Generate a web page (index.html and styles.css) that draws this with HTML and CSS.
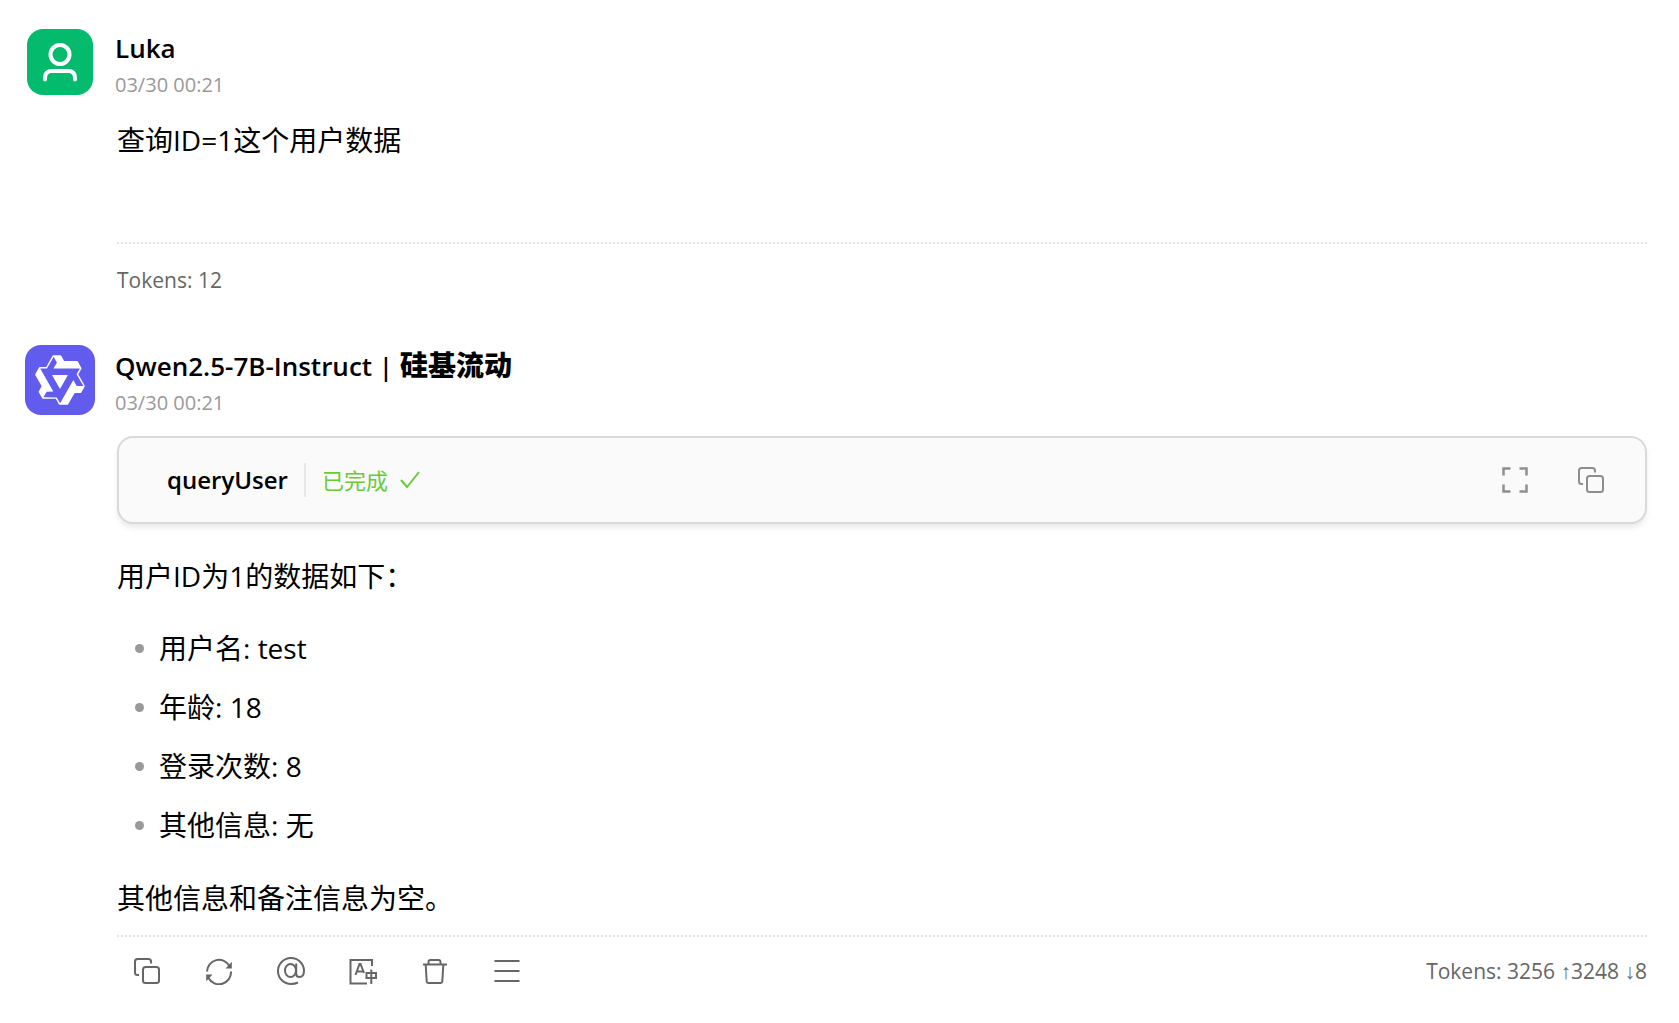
FILE: index.html
```html
<!DOCTYPE html>
<html lang="zh-CN">
<head>
<meta charset="utf-8">
<meta name="viewport" content="width=device-width, initial-scale=1">
<title>Chat</title>
<link rel="stylesheet" href="styles.css">
</head>
<body>
<svg class="sprite" aria-hidden="true">
  <symbol id="icon-copy" viewBox="0 0 28 28">
    <path d="M6 18H4.500a2.500 2.500 0 0 1-2.500-2.500V4.500A2.500 2.500 0 0 1 4.500 2h11A2.500 2.500 0 0 1 18 4.500V6.500"/>
    <rect x="10" y="10" width="16" height="16" rx="2.500"/>
  </symbol>
</svg>
<main class="chat">
  <article class="message">
    <div class="avatar">
      <svg class="avatar-user" viewBox="0 0 66 66" aria-hidden="true">
        <circle cx="33" cy="25.500" r="9.500"/>
        <path d="M18 50.500v-1.500q0-7 7-7h16q7 0 7 7v1.500"/>
      </svg>
    </div>
    <div class="body">
      <header class="head">
        <h2 class="name">Luka</h2>
        <time class="time">03/30 00:21</time>
      </header>
      <div class="content content-user"><p>查询ID=1这个用户数据</p></div>
      <footer class="foot"><span class="tokens">Tokens: 12</span></footer>
    </div>
  </article>

  <article class="message">
    <div class="avatar">
      <svg class="avatar-model" viewBox="0 0 70 70" aria-hidden="true">
        <svg x="8" y="8" width="54" height="54" viewBox="0 0 24 24"><path fill-rule="evenodd" d="M12.604 1.340c.393.690.784 1.382 1.174 2.075a.18.18 0 00.157.091h5.552c.174 0 .322.110.446.327l1.454 2.570c.190.337.240.478.024.837-.260.430-.513.864-.760 1.300l-.367.658c-.106.196-.223.280-.040.512l2.652 4.637c.172.301.111.494-.043.770-.437.785-.882 1.564-1.335 2.340-.159.272-.352.375-.680.370-.777-.016-1.552-.010-2.327.016a.099.099 0 00-.081.050 575.097 575.097 0 01-2.705 4.740c-.169.293-.380.363-.725.364-.997.003-2.002.004-3.017.002a.537.537 0 01-.465-.271l-1.335-2.323a.09.09 0 00-.083-.049H4.982c-.285.030-.553-.001-.805-.092l-1.603-2.770a.543.543 0 01-.002-.540l1.207-2.120a.198.198 0 000-.197 550.951 550.951 0 01-1.875-3.272l-.790-1.395c-.160-.310-.173-.496.095-.965.465-.813.927-1.625 1.387-2.436.132-.234.304-.334.584-.335a338.300 338.300 0 012.589-.001.124.124 0 00.107-.063l2.806-4.895a.488.488 0 01.422-.246c.524-.001 1.053 0 1.583-.006L11.704 1c.341-.003.724.032.900.340zm-3.432.403a.06.06 0 00-.052.030L6.254 6.788a.157.157 0 01-.135.078H3.253c-.056 0-.070.025-.041.074l5.810 10.156c.025.042.013.062-.034.063l-2.795.015a.218.218 0 00-.200.116l-1.320 2.310c-.044.078-.021.118.068.118l5.716.008c.046 0 .080.020.104.061l1.403 2.454c.046.081.092.082.139 0l5.006-8.760.783-1.382a.055.055 0 01.096 0l1.424 2.530a.122.122 0 00.107.062l2.763-.020a.04.04 0 00.035-.020.041.041 0 000-.040l-2.900-5.086a.108.108 0 010-.113l.293-.507 1.120-1.977c.024-.041.012-.062-.035-.062H9.200c-.059 0-.073-.026-.043-.077l1.434-2.505a.107.107 0 000-.114L9.225 1.774a.06.06 0 00-.053-.031zm6.290 8.020c.046 0 .058.020.034.060l-.832 1.465-2.613 4.585a.056.056 0 01-.050.029.058.058 0 01-.050-.029L8.498 9.841c-.020-.034-.010-.052.028-.054l.216-.012 6.722-.012z"/></svg>
      </svg>
    </div>
    <div class="body">
      <header class="head">
        <h2 class="name">Qwen2.5-7B-Instruct | <b>硅基流动</b></h2>
        <time class="time">03/30 00:21</time>
      </header>
      <section class="tool">
        <h3 class="tool-name">queryUser</h3>
        <span class="tool-status">已完成
          <svg class="check" viewBox="0 0 20 18" aria-hidden="true"><path d="M1 9l6 7L19 1"/></svg>
        </span>
        <div class="tool-actions">
          <button class="icon-button" type="button" aria-label="展开">
            <svg class="icon icon-expand" viewBox="0 0 28 28"><path d="M2.500 9.500v-7h7M18.500 2.500h7v7M25.500 18.500v7h-7M9.500 25.500h-7v-7"/></svg>
          </button>
          <button class="icon-button" type="button" aria-label="复制">
            <svg class="icon"><use href="#icon-copy"/></svg>
          </button>
        </div>
      </section>
      <div class="content">
        <p>用户ID为1的数据如下：</p>
        <ul class="list">
          <li>用户名: test</li>
          <li>年龄: 18</li>
          <li>登录次数: 8</li>
          <li>其他信息: 无</li>
        </ul>
        <p>其他信息和备注信息为空。</p>
      </div>
      <footer class="foot foot-actions">
        <div class="actions">
          <button class="icon-button" type="button" aria-label="复制">
            <svg class="icon"><use href="#icon-copy"/></svg>
          </button>
          <button class="icon-button" type="button" aria-label="重新生成">
            <svg class="icon" viewBox="0 0 28 28"><path d="M2 14.500A12 12 0 0 1 24.500 9M26 14.500A12 12 0 0 1 3.500 21"/><path class="solid" d="M26.800 4.800v6.700h-6.300zM1.200 24.200v-6.700h6.300z"/></svg>
          </button>
          <button class="icon-button" type="button" aria-label="提及模型">
            <svg class="icon icon-at" viewBox="0 0 28 28"><ellipse cx="13.500" cy="13.500" rx="5.500" ry="6.500"/><path d="M19.200 6.500v10c0 2.200 1 3.600 3.200 3.600 2.900 0 4.600-2.800 4.600-6.600A13 13 0 1 0 14 27c3 0 5-.5 7-1.500"/></svg>
          </button>
          <button class="icon-button" type="button" aria-label="翻译">
            <svg class="icon" viewBox="0 0 28 28"><path d="M23 9V3H1.500v23.500H18"/><path d="M6.500 18l4-11h1l3.500 9M8 14.500h6M17.500 16h9.500v5h-9.500zM22.300 12.500v14.500"/></svg>
          </button>
          <button class="icon-button" type="button" aria-label="删除">
            <svg class="icon" viewBox="0 0 28 28"><path d="M2 7.500h24M7.500 7V5q0-2 2-2h8q2 0 2 2v2M4.700 8l1 16.500q.1 1.500 1.500 1.500h12.600q1.400 0 1.500-1.500L22.300 8"/></svg>
          </button>
          <button class="icon-button" type="button" aria-label="更多">
            <svg class="icon" viewBox="0 0 28 28"><path d="M1.500 4h25M1.500 14h25M1.500 24h25"/></svg>
          </button>
        </div>
        <span class="tokens">Tokens: 3256 ↑3248 ↓8</span>
      </footer>
    </div>
  </article>
</main>
</body>
</html>
```
FILE: styles.css
```css
* {
  box-sizing: border-box;
}

body {
  margin: 0;
  background: #fff;
  color: #000;
  font-family: "Open Sans", "Liberation Sans", "Noto Sans CJK SC", sans-serif;
  font-size: 28px;
  line-height: 44px;
}

h2, h3, p, ul {
  margin: 0;
  padding: 0;
}

.sprite {
  display: none;
}

.chat {
  display: flex;
  flex-direction: column;
  gap: 48px;
  padding: 26px 32px 20px 25px;
}

.message {
  display: grid;
  grid-template-columns: 70px minmax(0, 1fr);
  gap: 22px;
}

.avatar {
  display: flex;
  justify-content: center;
  align-items: center;
  height: 70px;
  margin-top: 1px;
}

.avatar svg {
  display: block;
}

.avatar-user {
  width: 66px;
  height: 66px;
  border-radius: 16px;
  background: #04ba6c;
  fill: none;
  stroke: #fff;
  stroke-width: 4;
  stroke-linecap: round;
}

.avatar-model {
  width: 70px;
  height: 70px;
  border-radius: 16px;
  background: #615ced;
  fill: #fff;
}

.head {
  display: flex;
  flex-direction: column;
  margin-left: -2px;
}

.name {
  font-size: 26px;
  font-weight: 600;
  line-height: 44px;
}

.name b {
  font-size: 28px;
  line-height: 1;
}

.time {
  color: #999;
  font-size: 20px;
  line-height: 30px;
}

.content {
  padding: 30px 0 15px;
}

.content-user {
  padding: 18px 0 80px;
}

.list {
  display: grid;
  gap: 15px;
  margin: 28px 0 29px;
  list-style: none;
}

.list li {
  display: flex;
  align-items: center;
  gap: 15px;
  padding-left: 18px;
}

.list li::before {
  content: "";
  width: 9px;
  height: 9px;
  border-radius: 50%;
  background: #999;
}

.foot {
  display: flex;
  align-items: center;
  padding-top: 20px;
  border-top: 2px dotted #e5e5e5;
  color: #666;
}

.foot-actions {
  justify-content: space-between;
  padding-top: 4px;
}

.tokens {
  font-size: 21px;
  line-height: 32px;
}

.actions {
  display: flex;
  gap: 12px;
}

.icon-button {
  display: flex;
  justify-content: center;
  align-items: center;
  width: 60px;
  height: 60px;
  padding: 0;
  border: 0;
  background: none;
  color: inherit;
  cursor: pointer;
}

.icon {
  width: 28px;
  height: 28px;
  fill: none;
  stroke: currentColor;
  stroke-width: 2;
}

.icon .solid {
  fill: currentColor;
  stroke: none;
}

.icon-expand {
  stroke-width: 2.500;
}

.tool {
  display: flex;
  align-items: center;
  height: 88px;
  margin-top: 18px;
  padding: 0 24px 0 48px;
  border: 2px solid #d9d9d9;
  border-radius: 16px;
  background: #fafafa;
  box-shadow: 0 4px 6px -1px rgb(0 0 0 / 10%);
}

.tool-name {
  padding-right: 16px;
  border-right: 2px solid #e8e8e8;
  font-size: 24px;
  font-weight: 600;
  line-height: 34px;
}

.tool-status {
  display: flex;
  align-items: center;
  gap: 12px;
  margin-left: 16px;
  color: #68cc36;
  font-size: 22px;
  line-height: 32px;
}

.check {
  width: 20px;
  height: 18px;
  fill: none;
  stroke: currentColor;
  stroke-width: 2;
}

.tool-actions {
  display: flex;
  gap: 16px;
  margin-left: auto;
  color: #8e8e8e;
}
```
